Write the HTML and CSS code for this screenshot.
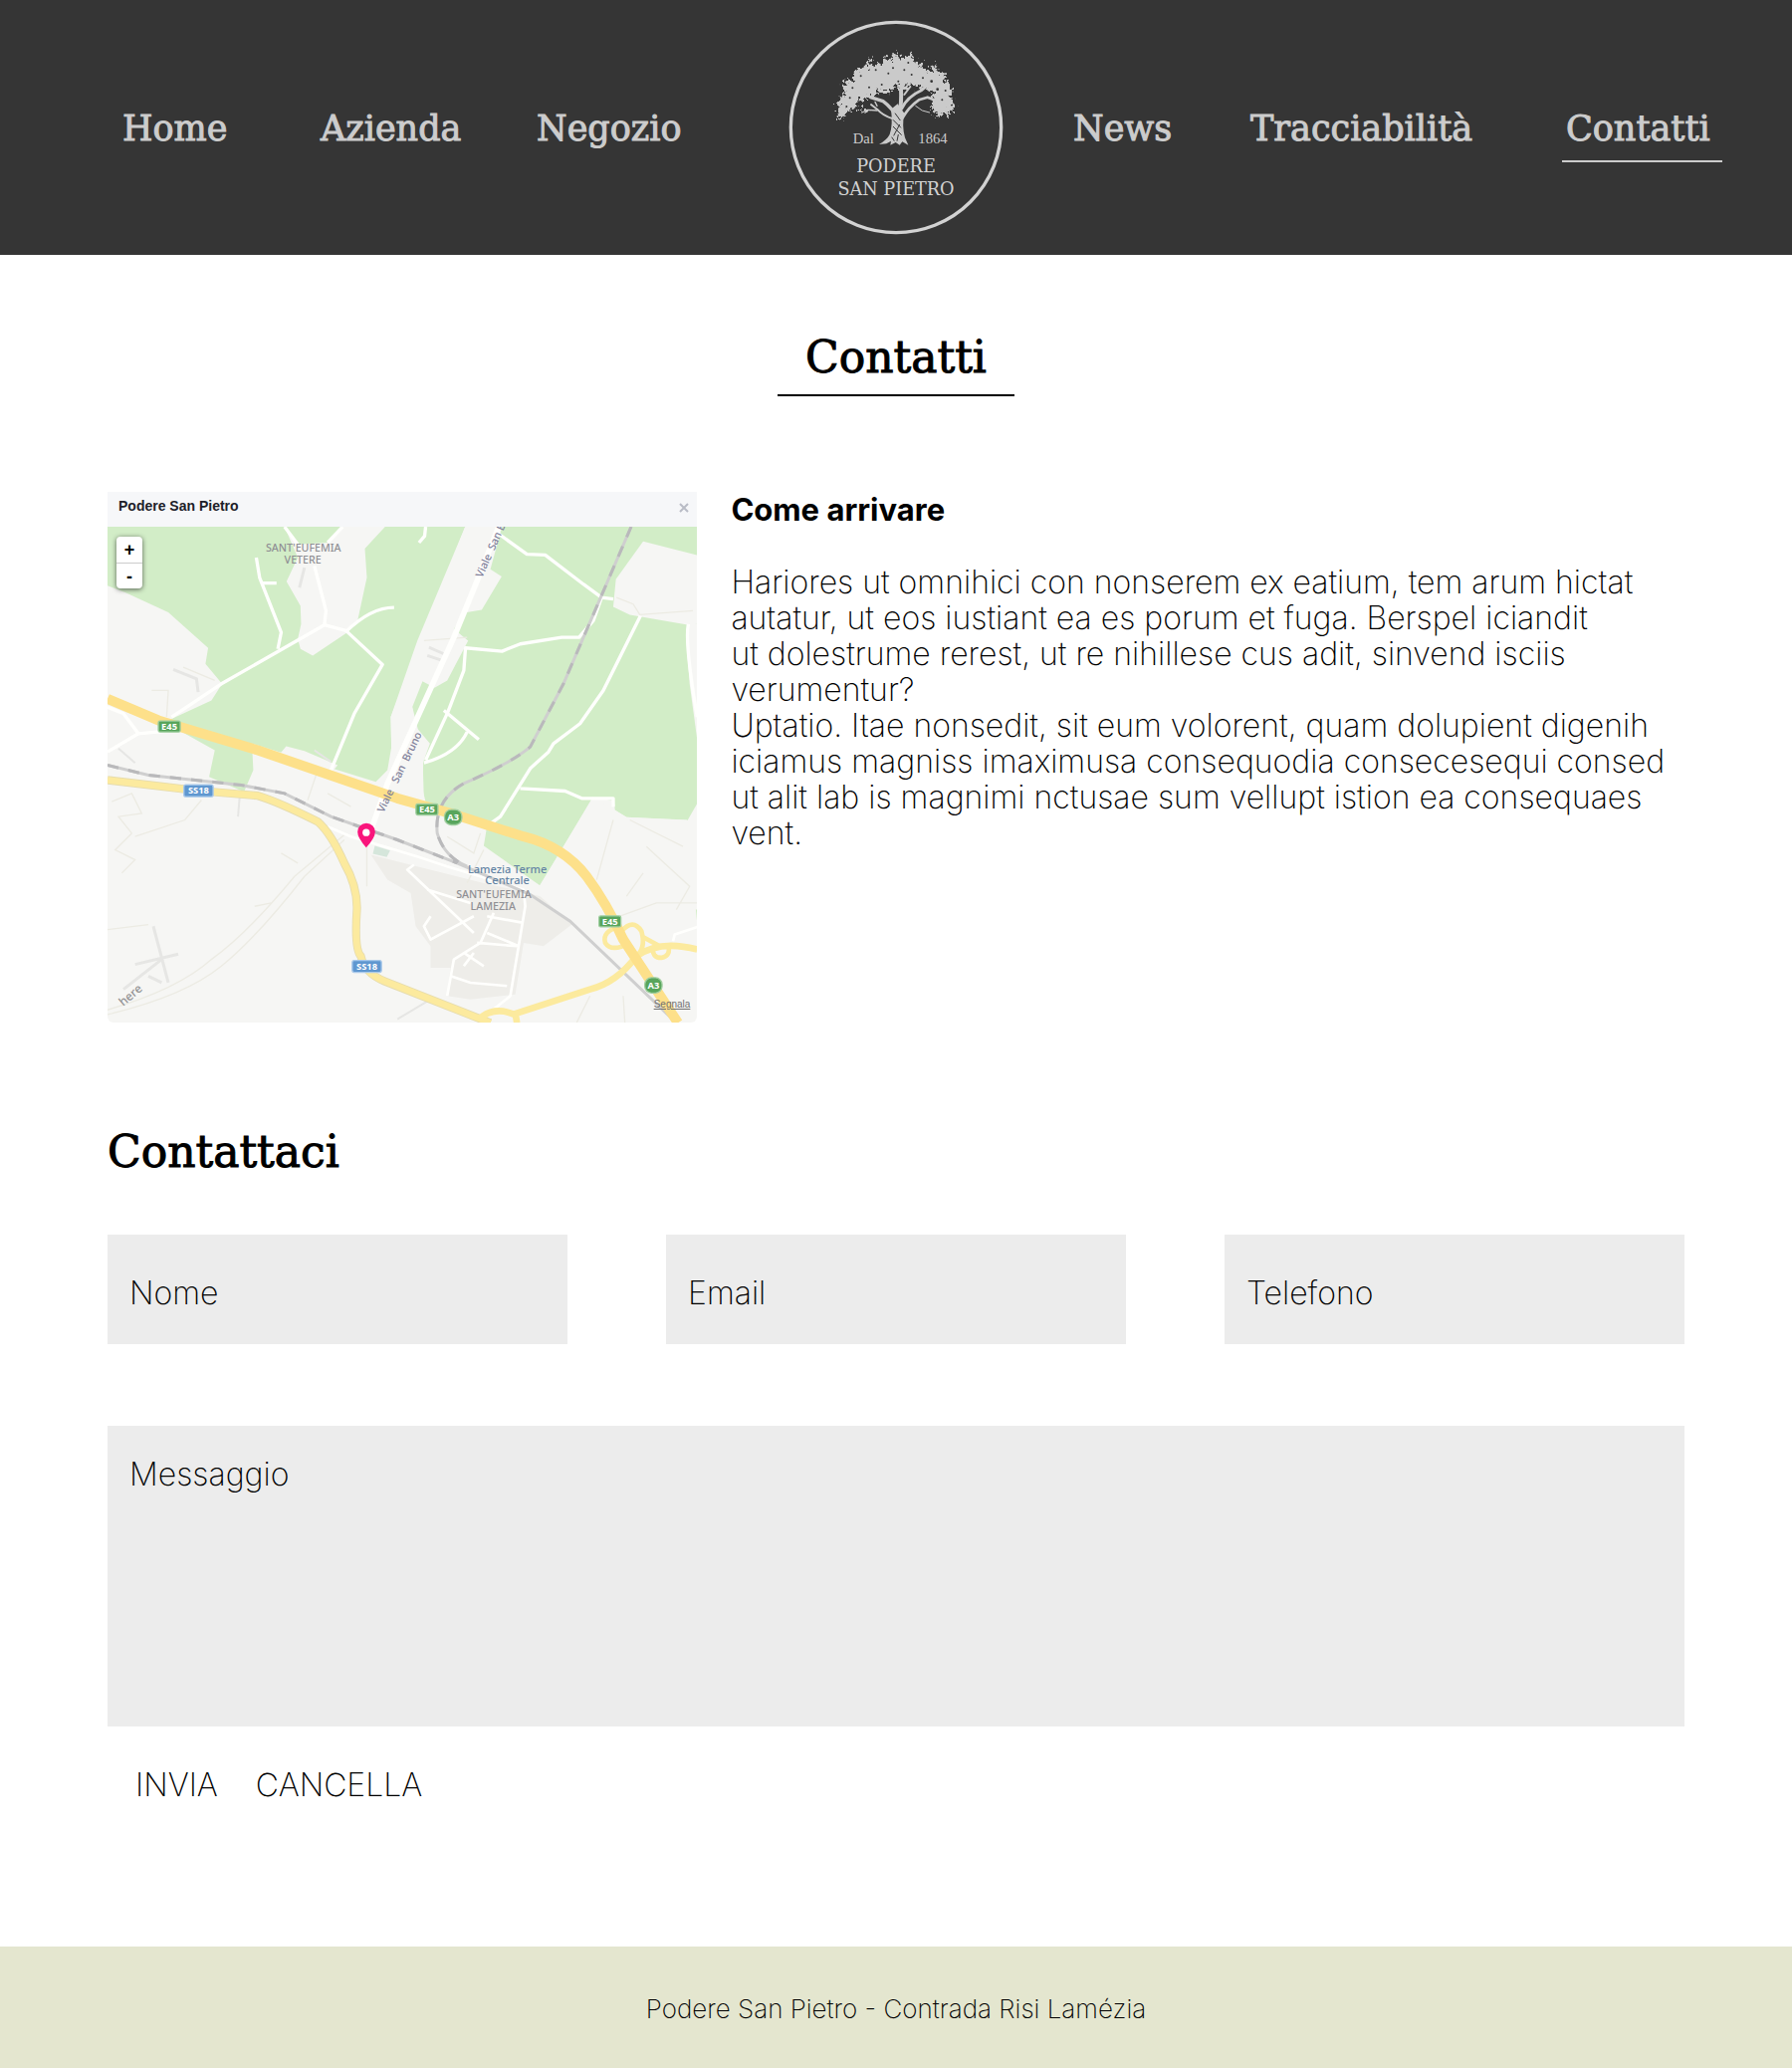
FILE: index.html
```html
<!DOCTYPE html>
<html lang="it">
<head>
<meta charset="utf-8">
<meta name="viewport" content="width=device-width, initial-scale=1">
<title>Podere San Pietro - Contatti</title>
<link rel="stylesheet" href="styles.css">
</head>
<body>
<header class="site-header">
  <nav aria-label="Principale">
    <ul class="menu">
      <li><a class="menu-link" href="#home">Home</a></li>
      <li><a class="menu-link" href="#azienda">Azienda</a></li>
      <li><a class="menu-link" href="#negozio">Negozio</a></li>
      <li>
        <a class="logo" href="#home" aria-label="Podere San Pietro">
          <svg viewBox="37 31 648 648" width="216" height="216">
            <defs>
              <filter id="leaves" x="-10%" y="-20%" width="120%" height="140%">
                <feTurbulence type="fractalNoise" baseFrequency="0.09" numOctaves="3" seed="4" result="n"/>
                <feDisplacementMap in="SourceGraphic" in2="n" scale="44" xChannelSelector="R" yChannelSelector="G"/>
              </filter>
            </defs>
            <circle cx="361" cy="355" r="317" fill="none" stroke="#d2d2d2" stroke-width="10"/>
            <g fill="#cacaca" filter="url(#leaves)">
              <path d="M186 318 184 276 206 250 204 220 234 208 238 182 272 172 282 138 292 168 318 160 328 144 346 152 362 124 376 150 406 134 420 160 440 168 452 188 476 178 482 156 486 186 510 194 512 220 530 236 528 266 538 296 522 318 506 306 488 324 470 304 468 274 478 254 456 238 440 230 426 234 400 224 384 238 360 232 340 248 312 246 292 266 268 264 246 276 240 298 216 304 206 324Z"/>
              <circle cx="196" cy="322" r="6"/><circle cx="486" cy="322" r="6"/><circle cx="262" cy="302" r="7"/>
            </g>
            <g fill="#353535">
              <circle cx="255" cy="200" r="3"/><circle cx="300" cy="182" r="3"/><circle cx="338" cy="192" r="3"/><circle cx="352" cy="176" r="3"/><circle cx="386" cy="182" r="3"/><circle cx="408" cy="196" r="3"/><circle cx="280" cy="234" r="3"/><circle cx="318" cy="226" r="3"/><circle cx="368" cy="216" r="3"/><circle cx="442" cy="206" r="3"/><circle cx="468" cy="216" r="4"/><circle cx="486" cy="240" r="4"/><circle cx="500" cy="272" r="3"/><circle cx="222" cy="266" r="3"/><circle cx="212" cy="292" r="3"/><circle cx="230" cy="236" r="3"/><circle cx="398" cy="160" r="3"/><circle cx="510" cy="244" r="3"/>
            </g>
            <g fill="none" stroke="#cacaca" stroke-linecap="round" stroke-linejoin="round">
              <path d="M366 330Q350 296 322 276L284 264" stroke-width="10"/>
              <path d="M372 310Q378 280 376 240" stroke-width="12"/>
              <path d="M378 298Q396 262 436 244L456 228" stroke-width="9"/>
              <path d="M386 256 404 232" stroke-width="6"/>
              <path d="M380 328Q398 294 430 272L456 264 476 272" stroke-width="8"/>
              <path d="M350 328Q322 320 304 300L286 286" stroke-width="6"/>
              <path d="M304 304 276 302 258 310M304 290 298 278" stroke-width="4"/>
              <path d="M420 290 440 304 462 310" stroke-width="3"/>
            </g>
            <path fill="#cacaca" d="M346 300Q352 346 342 376 334 392 310 406L332 404 346 396 344 408 360 400 372 408 380 398 398 408 388 386Q378 350 386 312L366 284Z"/>
            <path d="M358 312 374 334M352 332 376 356M352 352 378 378M372 346 354 380M348 384 356 396M368 376 364 396" fill="none" stroke="#353535" stroke-width="3"/>
            <text class="logo-year" x="231" y="404">Dal</text>
            <text class="logo-year" x="428" y="404">1864</text>
            <text class="logo-name" x="361" y="491">PODERE</text>
            <text class="logo-name" x="361" y="560">SAN PIETRO</text>
          </svg>
        </a>
      </li>
      <li><a class="menu-link" href="#news">News</a></li>
      <li><a class="menu-link" href="#tracciabilita">Tracciabilità</a></li>
      <li><a class="menu-link menu-link-current" href="#contatti" aria-current="page">Contatti</a></li>
    </ul>
  </nav>
</header>

<main class="content">
  <h1 class="page-title">Contatti</h1>

  <section class="directions">
    <div class="map-card">
      <div class="map-head">
        <h2 class="map-title">Podere San Pietro</h2>
        <button class="map-close" type="button" aria-label="Chiudi">
          <svg viewBox="0 0 10 10" width="10" height="10"><path d="M1 1 9 9M9 1 1 9" stroke="#b9bcc6" stroke-width="2"/></svg>
        </button>
      </div>
      <div class="map-view">
        <svg class="map-art" viewBox="27 147 1776 1494" role="img" aria-label="Mappa di Lamezia Terme">
          <rect x="27" y="147" width="1776" height="1494" fill="#f6f6f4"/>
          <!-- woods -->
          <g fill="#d2edc7">
            <path d="M27 147H1803V1345L1772 1030 1590 1022 1555 1000 1553 972 1488 962 1330 1228 1160 1108 1168 1060 980 975 975 810 945 690 1100 300 1105 147H1104L960 490 880 720 882 810 870 880 835 915 462 800 466 880 438 945 333 900 350 820 260 770 215 728 340 670 372 620 322 560 330 512 210 405 80 345 27 325Z"/>
          </g>
          <g fill="#f6f6f4">
            <path d="M1104 147H1215L1180 275 1214 297 1154 397 1100 406 1070 455 1113 490 1050 610 1012 632 974 612 944 685 952 745 998 800 978 855 975 935 985 975 868 925 882 830 880 720Z"/>
            <path d="M560 147 600 200 690 195 735 147H863L802 213 808 300 780 430 750 465 645 535 608 515 600 485 610 440 608 385 566 312 600 240Z"/>
            <path d="M1640 191 1803 233V440L1778 443 1600 412 1550 388 1558 305Z"/>
            <path d="M1776 440H1803V790L1780 620 1770 490Z"/>
            <path d="M1803 980 1774 1031 1590 1022 1490 962 1328 1228V1300H1803Z"/>
            <path d="M540 838 565 808 620 822 720 865 700 890 560 870Z"/>
          </g>
          <!-- built-up area -->
          <path fill="#eeede9" d="M820 1135 960 1170 1160 1220 1250 1240 1330 1260 1425 1345 1340 1410 1280 1400 1255 1555 1120 1570 1050 1560 1060 1475 1000 1475 1000 1410 955 1350 940 1250 870 1210Z"/>
          <path fill="#d5e6db" d="M832 1108 878 1122 868 1142 826 1132Z"/>
          <!-- faint tracks -->
          <g fill="none" stroke="#ecebe3" stroke-width="4">
            <path d="M27 1602Q240 1540 340 1450 450 1370 590 1200L740 1075M27 1616Q260 1560 370 1470 480 1380 620 1200L740 1090"/>
            <path d="M27 1360 150 1345M110 1080 260 1030 310 970M808 1110V1230M470 1290 520 1280M550 1130 600 1160M690 950 760 990M660 880 630 970"/>
            <path d="M40 975 100 950 130 1010 60 1020 100 1070 50 1120 110 1150 70 1190M160 640 210 640 205 720M255 570 350 610"/>
            <path d="M1550 1030 1500 1210M1600 1030 1760 1110M1650 1110 1780 1230 1740 1300M1590 1260 1640 1190M1570 1320 1680 1280H1803M1580 1560 1585 1640M1440 1640 1480 1560"/>
            <path d="M980 490 1110 480M1560 360 1610 380 1630 412 1790 400"/>
            <path d="M1050 1080 1130 1130 1150 1070M1160 1120 1110 1220"/>
          </g>
          <g fill="none" stroke="#e6e6e4">
            <path d="M165 1350 210 1520M110 1465 240 1434M75 1540 190 1450M150 1500 190 1520M225 577 295 605 300 645M605 330 620 270M995 510 1040 530M990 535 1035 550" stroke-width="9"/>
            <path d="M425 960 420 1020M60 815 110 858M650 820 700 855M900 1630 1000 1570" stroke-width="6"/>
          </g>
          <!-- minor roads -->
          <g fill="none" stroke="#fffffd" stroke-width="10" stroke-linejoin="round">
            <path d="M475 240 485 300 550 465 540 515M490 317H536M220 720 370 620 680 443 745 460 855 562 770 710 700 880M650 265 685 400 680 443M745 463Q820 390 890 390M560 147 600 200M690 195 735 147M985 147 982 175 965 195"/>
            <path d="M27 690 75 710 120 770 27 825M120 770 210 762"/>
            <path d="M1200 165 1290 230 1345 232 1460 320 1515 360 1490 430 1447 480 1395 480 1270 500 1215 522 1105 512 1100 580 1052 705 985 850M1040 700 1145 788M1110 765Q1080 830 980 858M1515 360 1550 365M1632 415 1520 640 1450 740 1370 800 1355 825 1300 875 1210 1020 1170 1048M1270 935 1405 943 1455 965H1550V990M1776 440Q1765 500 1803 720"/>
            <path d="M690 1050 760 1080 960 1140 1050 1170 1280 1240 1285 1290 1240 1560 1190 1600M1050 1560 1070 1450 1150 1400 1190 1310M1060 1500 1120 1520 1230 1530M1140 1400 1260 1410M1170 1370 1265 1410M1000 1320 980 1350 1000 1390 1130 1320M950 1165 930 1180 1130 1370M990 1240 1120 1280M1170 1320 1280 1340M1100 1430 1160 1470M1130 1430 1100 1470M1730 1395 1735 1375 1803 1352" stroke-width="8"/>
            <path d="M1205 147 1140 310 1070 480 870 920 810 1090" stroke-width="17"/>
          </g>
          <!-- railway -->
          <g fill="none">
            <path d="M27 865 150 895 430 925 560 950 700 1020 900 1090 1080 1160 1300 1255 1420 1335 1740 1641M1604 147 1400 620 1300 810Q1240 860 1100 920 1010 970 1020 1070 1040 1140 1110 1170" stroke="#cfcfcf" stroke-width="9"/>
            <path d="M27 865 150 895 430 925 560 950 700 1020 900 1090 1080 1160M1604 147 1400 620 1300 810Q1240 860 1100 920 1010 970 1020 1070 1040 1140 1110 1170" stroke="#b9b9bb" stroke-width="9" stroke-dasharray="34 30"/>
          </g>
          <!-- main roads -->
          <g fill="none" stroke-linejoin="round">
            <path d="M27 910 300 942 480 957Q540 975 660 1035 700 1070 740 1160 780 1230 778 1300 770 1420 790 1440 800 1490 860 1515L1180 1641" stroke="#e6dcae" stroke-width="25"/>
            <path d="M27 910 300 942 480 957Q540 975 660 1035 700 1070 740 1160 780 1230 778 1300 770 1420 790 1440 800 1490 860 1515L1180 1641" stroke="#fcea9e" stroke-width="20"/>
            <path d="M1145 1630Q1190 1590 1250 1615L1480 1540Q1560 1520 1620 1440 1690 1390 1803 1420M1255 1612 1260 1641" stroke="#fcea9e" stroke-width="20"/>
            <path d="M1575 1365Q1610 1325 1635 1365 1650 1420 1615 1445M1635 1380 1690 1410M1670 1410Q1665 1445 1695 1445 1725 1440 1715 1405M1570 1350Q1515 1365 1526 1400 1545 1430 1600 1400" stroke="#fcea9e" stroke-width="14"/>
            <path d="M27 665 180 730 480 820 900 965 1060 1010 1280 1080Q1400 1110 1470 1200 1530 1280 1580 1390L1745 1641" stroke="#fde08a" stroke-width="30"/>
          </g>
          <!-- road shields -->
          <g class="shield">
            <g fill="#58a55c" stroke="#9fce9f" stroke-width="4">
              <rect x="180" y="732" width="66" height="33" rx="5"/><rect x="956" y="982" width="66" height="33" rx="5"/><rect x="1507" y="1319" width="66" height="33" rx="5"/>
              <rect x="1042" y="999" width="52" height="46" rx="20"/><rect x="1645" y="1505" width="52" height="46" rx="20"/>
            </g>
            <g fill="#5f97d0" stroke="#a9c9ea" stroke-width="4"><rect x="257" y="924" width="88" height="36" rx="6"/><rect x="764" y="1453" width="88" height="36" rx="6"/></g>
            <text x="213" y="758">E45</text><text x="989" y="1008">E45</text><text x="1540" y="1345">E45</text>
            <text x="1068" y="1031">A3</text><text x="1671" y="1537">A3</text>
            <text x="301" y="951">SS18</text><text x="808" y="1480">SS18</text>
          </g>
          <!-- place names -->
          <g class="place">
            <text x="617" y="221">SANT'EUFEMIA</text><text x="615" y="257">VETERE</text>
            <text x="1190" y="1265">SANT'EUFEMIA</text><text x="1188" y="1301">LAMEZIA</text>
          </g>
          <g class="station"><text x="1231" y="1191">Lamezia Terme</text><text x="1231" y="1224">Centrale</text></g>
          <g class="street">
            <text transform="translate(1155 302) rotate(-66)">Viale&#160; San B</text>
            <text transform="translate(858 1010) rotate(-64)">Viale&#160; &#160;San&#160; Bruno</text>
          </g>
          <text class="brand" transform="translate(74 1592) rotate(-40)">here</text>
          <!-- position pin -->
          <path fill="#f9157c" fill-rule="evenodd" d="M806 1113Q780 1084 780 1066A26 26 0 0 1 833 1066Q833 1084 806 1113Z"/>
          <circle cx="806" cy="1068" r="11" fill="#fff"/>
        </svg>
        <div class="map-zoom">
          <button class="zoom-button" type="button" aria-label="Ingrandisci">+</button>
          <button class="zoom-button" type="button" aria-label="Riduci">-</button>
        </div>
        <a class="map-report" href="#segnala">Segnala</a>
      </div>
    </div>

    <div class="directions-text">
      <h2 class="subtitle">Come arrivare</h2>
      <p class="copy">Hariores ut omnihici con nonserem ex eatium, tem arum hictat<br>
      autatur, ut eos iustiant ea es porum et fuga. Berspel iciandit<br>
      ut dolestrume rerest, ut re nihillese cus adit, sinvend isciis<br>
      verumentur?<br>
      Uptatio. Itae nonsedit, sit eum volorent, quam dolupient digenih<br>
      iciamus magniss imaximusa consequodia consecesequi consed<br>
      ut alit lab is magnimi nctusae sum vellupt istion ea consequaes<br>
      vent.</p>
    </div>
  </section>

  <section class="contact">
    <h2 class="section-title">Contattaci</h2>
    <form class="contact-form">
      <div class="fields">
        <input class="field" type="text" placeholder="Nome" aria-label="Nome">
        <input class="field" type="email" placeholder="Email" aria-label="Email">
        <input class="field" type="tel" placeholder="Telefono" aria-label="Telefono">
      </div>
      <textarea class="field field-message" placeholder="Messaggio" aria-label="Messaggio"></textarea>
      <div class="actions">
        <button class="action" type="submit">INVIA</button>
        <button class="action" type="reset">CANCELLA</button>
      </div>
    </form>
  </section>
</main>

<footer class="site-footer">Podere San Pietro - Contrada Risi Lamézia</footer>
</body>
</html>
```
FILE: styles.css
```css
:root {
  --slab: "DejaVu Serif", serif;
  --sans: Inter, "Open Sans", sans-serif;
  --dark: #353535;
  --silver: #cccccc;
  --field: #ececec;
}

* { box-sizing: border-box; }

body {
  margin: 0;
  background: #fff;
  color: #000;
  font-family: var(--sans);
  font-size: 32px;
  font-weight: 200;
  line-height: 36px;
}

h1, h2, p, ul { margin: 0; padding: 0; }

svg { display: block; }

.site-header {
  background: var(--dark);
  padding: 20px 0 20px 123px;
}

.menu {
  display: grid;
  grid-template-columns: 199fr 217fr 253fr 286fr 178fr 313fr 231fr;
  align-items: center;
  list-style: none;
}

.menu-link {
  display: inline-block;
  padding: 13px 0 10px;
  border-bottom: 2px solid transparent;
  color: var(--silver);
  font: 35px/44px var(--slab);
  text-decoration: none;
  -webkit-text-stroke: 1px currentColor;
}

.menu-link-current {
  padding-left: 4px;
  padding-right: 12px;
  border-color: var(--silver);
}

.logo { display: block; }

.logo-year {
  fill: #cacaca;
  font: 44px "Liberation Serif", serif;
}

.logo-name {
  fill: #d2d2d2;
  font: 53px "DejaVu Serif", serif;
  text-anchor: middle;
}

.content { padding: 73px 6% 144px; }

.page-title {
  width: 238px;
  margin: 0 auto;
  padding-bottom: 7px;
  border-bottom: 2px solid #000;
  font: 44px/60px var(--slab);
  text-align: center;
  -webkit-text-stroke: 1px currentColor;
}

.directions {
  display: grid;
  grid-template-columns: 592fr 957fr;
  gap: 34px;
  align-items: start;
  margin-top: 96px;
}

.map-card {
  overflow: hidden;
  border-radius: 0 0 6px 6px;
}

.map-head {
  display: flex;
  align-items: center;
  justify-content: space-between;
  height: 35px;
  padding: 0 6px 8px 11px;
  background: #f6f7f9;
}

.map-title {
  color: #1d2129;
  font: bold 14px/20px "Liberation Sans", sans-serif;
}

.map-close {
  padding: 4px 2px 0;
  border: 0;
  background: none;
}

.map-view { position: relative; }

.map-art { width: 100%; height: auto; }

.map-art text { font-family: "Noto Sans", sans-serif; font-weight: 500; }

.map-art .shield text {
  fill: #fff;
  font-size: 28px;
  font-weight: 700;
  text-anchor: middle;
}

.place text {
  fill: #909094;
  font-size: 32px;
  text-anchor: middle;
}

.station text {
  fill: #6484a4;
  font-size: 33px;
  text-anchor: middle;
}

.street text {
  fill: #80809a;
  font-size: 32px;
}

.map-art .brand {
  fill: #949494;
  font-size: 36px;
}

.map-zoom {
  position: absolute;
  top: 10px;
  left: 9px;
  width: 26px;
  border-radius: 4px;
  background: #fff;
  box-shadow: 0 1px 5px rgba(0, 0, 0, 0.6);
}

.zoom-button {
  display: block;
  width: 100%;
  height: 26px;
  padding: 0;
  border: 0;
  background: none;
  color: #000;
  font: bold 18px/26px "Liberation Sans", sans-serif;
}

.zoom-button + .zoom-button { border-top: 1px solid #ccc; }

.map-report {
  position: absolute;
  right: 7px;
  bottom: 10px;
  color: #707070;
  font: 10px/16px "Liberation Sans", sans-serif;
}

.subtitle {
  font-size: 31px;
  font-weight: 700;
  line-height: 36px;
}

.copy { margin-top: 37px; }

.section-title {
  margin-top: 100px;
  font: 44px/60px var(--slab);
  -webkit-text-stroke: 1px currentColor;
}

.contact-form { margin-top: 53px; }

.fields {
  display: grid;
  grid-template-columns: repeat(3, 1fr);
  gap: 99px;
}

.field {
  display: block;
  width: 100%;
  height: 110px;
  padding: 6px 22px 0;
  border: 0;
  background: var(--field);
  color: #000;
  font: inherit;
}

.field::placeholder {
  color: #000;
  opacity: 1;
}

.field-message {
  height: 302px;
  margin-top: 82px;
  padding-top: 31px;
  resize: none;
}

.actions {
  display: flex;
  gap: 38px;
  padding: 41px 28px 0;
}

.action {
  padding: 0;
  border: 0;
  background: none;
  color: #000;
  font: inherit;
}

.site-footer {
  padding: 48px 20px 44px;
  background: #e4e6cf;
  font-size: 26px;
  line-height: 30px;
  text-align: center;
}
```
